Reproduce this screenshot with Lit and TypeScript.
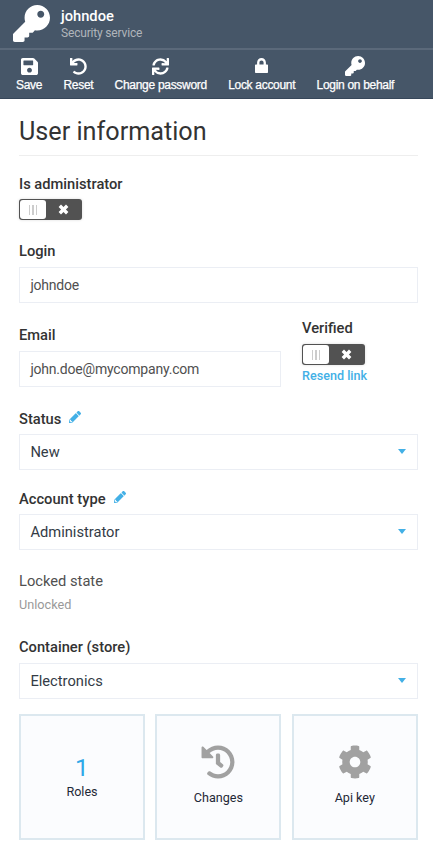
import { LitElement, html, css, svg } from "lit";
import { customElement } from "lit/decorators.js";

const PATHS: Record<string, [string, string]> = {
  key: ["0 0 512 512", "M512 176.001C512 273.203 433.202 352 336 352c-11.22 0-22.19-1.062-32.827-3.069l-24.012 27.014A23.999 23.999 0 0 1 261.223 384H224v40c0 13.255-10.745 24-24 24h-40v40c0 13.255-10.745 24-24 24H24c-13.255 0-24-10.745-24-24v-78.059c0-6.365 2.529-12.47 7.029-16.971l161.802-161.802C163.108 213.814 160 195.271 160 176 160 78.798 238.797.001 335.999 0 433.488-.001 512 78.511 512 176.001zM336 128c0 26.51 21.49 48 48 48s48-21.49 48-48-21.49-48-48-48-48 21.49-48 48z"],
  save: ["0 32 448 448", "M433.941 129.941l-83.882-83.882A48 48 0 0 0 316.118 32H48C21.49 32 0 53.49 0 80v352c0 26.51 21.49 48 48 48h352c26.51 0 48-21.49 48-48V163.882a48 48 0 0 0-14.059-33.941zM224 416c-35.346 0-64-28.654-64-64 0-35.346 28.654-64 64-64s64 28.654 64 64c0 35.346-28.654 64-64 64zm96-304.52V212c0 6.627-5.373 12-12 12H76c-6.627 0-12-5.373-12-12V108c0-6.627 5.373-12 12-12h228.52c3.183 0 6.235 1.264 8.485 3.515l3.48 3.48A11.996 11.996 0 0 1 320 111.48z"],
  undo: ["0 0 512 512", "M212.333 224.333H12c-6.627 0-12-5.373-12-12V12C0 5.373 5.373 0 12 0h48c6.627 0 12 5.373 12 12v78.112C117.773 39.279 184.26 7.47 258.175 8.007c136.906.994 246.448 111.623 246.157 248.532C504.041 393.258 393.12 504 256.333 504c-64.089 0-122.496-24.313-166.51-64.215-5.099-4.622-5.334-12.554-.467-17.42l33.967-33.967c4.474-4.474 11.662-4.717 16.401-.525C170.76 415.336 211.58 432 256.333 432c97.268 0 176-78.716 176-176 0-97.267-78.716-176-176-176-58.496 0-110.28 28.476-142.274 72.333h98.274c6.627 0 12 5.373 12 12v48c0 6.627-5.373 12-12 12z"],
  sync: ["0 0 512 512", "M440.65 12.57l4 82.77A247.16 247.16 0 0 0 255.83 8C134.73 8 33.91 94.92 12.29 209.82A12 12 0 0 0 24.09 224h49.05a12 12 0 0 0 11.67-9.26 175.91 175.91 0 0 1 317-56.94l-101.46-4.86a12 12 0 0 0-12.57 12v47.41a12 12 0 0 0 12 12H500a12 12 0 0 0 12-12V12a12 12 0 0 0-12-12h-47.37a12 12 0 0 0-11.98 12.57zM255.83 432a175.61 175.61 0 0 1-146-77.8l101.8 4.87a12 12 0 0 0 12.57-12v-47.4a12 12 0 0 0-12-12H12a12 12 0 0 0-12 12V500a12 12 0 0 0 12 12h47.35a12 12 0 0 0 12-12.6l-4.15-82.57A247.17 247.17 0 0 0 255.83 504c121.11 0 221.93-86.92 243.55-201.82a12 12 0 0 0-11.8-14.18h-49.05a12 12 0 0 0-11.67 9.26A175.86 175.86 0 0 1 255.83 432z"],
  lock: ["0 0 448 512", "M424 224h-48v-72C376 68.2 307.8 0 224 0S72 68.2 72 152v72H24c-13 0-24 11-24 24v240c0 13 11 24 24 24h400c13 0 24-11 24-24V248c0-13-11-24-24-24zm-128 0H152v-72c0-39.7 32.3-72 72-72s72 32.3 72 72v72z"],
  history: ["0 0 512 512", "M504 255.531c.253 136.64-111.18 248.372-247.82 248.468-59.015.042-113.223-20.53-155.822-54.911-11.077-8.94-11.905-25.541-1.839-35.607l11.267-11.267c8.609-8.609 22.353-9.551 31.891-1.984C173.062 425.135 212.781 440 256 440c101.705 0 184-82.311 184-184 0-101.705-82.311-184-184-184-48.814 0-93.149 18.969-126.068 49.932l50.754 50.754c10.08 10.08 2.941 27.314-11.313 27.314H24c-8.837 0-16-7.163-16-16V38.627c0-14.254 17.234-21.393 27.314-11.314l49.372 49.372C129.209 34.136 189.552 8 256 8c136.81 0 247.747 110.78 248 247.531zm-180.912 78.784l9.823-12.63c8.138-10.463 6.253-25.542-4.21-33.679L288 256.349V152c0-13.255-10.745-24-24-24h-16c-13.255 0-24 10.745-24 24v135.651l65.409 50.874c10.463 8.137 25.541 6.253 33.679-4.21z"],
  cog: ["0 0 512 512", "M487.4 315.7l-42.6-24.6c4.3-23.2 4.3-47 0-70.2l42.6-24.6c4.9-2.8 7.1-8.6 5.5-14-11.1-35.6-30-67.8-54.7-94.6-3.8-4.1-10-5.1-14.8-2.3L380.8 110c-17.9-15.4-38.5-27.3-60.8-35.1V25.8c0-5.6-3.9-10.5-9.4-11.7-36.7-8.2-74.3-7.8-109.2 0-5.5 1.2-9.4 6.1-9.4 11.7V75c-22.2 7.9-42.8 19.8-60.8 35.1L88.7 85.5c-4.9-2.8-11-1.9-14.8 2.3-24.7 26.7-43.6 58.9-54.7 94.6-1.7 5.4.6 11.2 5.5 14L67.3 221c-4.3 23.2-4.3 47 0 70.2l-42.6 24.6c-4.9 2.8-7.1 8.6-5.5 14 11.1 35.6 30 67.8 54.7 94.6 3.8 4.1 10 5.1 14.8 2.3l42.6-24.6c17.9 15.4 38.5 27.3 60.8 35.1v49.2c0 5.6 3.9 10.5 9.4 11.7 36.7 8.2 74.3 7.8 109.2 0 5.5-1.2 9.4-6.1 9.4-11.7v-49.2c22.2-7.9 42.8-19.8 60.8-35.1l42.6 24.6c4.9 2.8 11 1.9 14.8-2.3 24.7-26.7 43.6-58.9 54.7-94.6 1.5-5.5-.7-11.3-5.6-14.1zM256 336c-44.1 0-80-35.9-80-80s35.9-80 80-80 80 35.9 80 80-35.9 80-80 80z"],
  pencil: ["0 0 512 512", "M497.9 142.1l-46.1 46.1c-4.7 4.7-12.3 4.7-17 0l-111-111c-4.7-4.7-4.7-12.3 0-17l46.1-46.1c18.7-18.7 49.1-18.7 67.9 0l60.1 60.1c18.8 18.7 18.8 49.1 0 67.9zM284.2 99.8L21.6 362.4.4 483.9c-2.9 16.4 11.4 30.6 27.8 27.8l121.5-21.3 262.6-262.6c4.7-4.7 4.7-12.3 0-17l-111-111c-4.8-4.7-12.4-4.7-17.1 0zM88 424h48v36.3l-64.5 11.3-31.1-31.1L51.7 376H88v48z"],
  times: ["0 0 11 11", "M3 .6 5.5 3.1 8 .6 10.4 3 7.9 5.5 10.4 8 8 10.4 5.5 7.9 3 10.4.6 8 3.1 5.5.6 3z"],
};

const icon = (name: string, cls: string) => html`
  <svg class=${cls} viewBox=${PATHS[name][0]} fill="currentColor" aria-hidden="true">
    ${svg`<path d=${PATHS[name][1]}></path>`}
  </svg>`;

const ACTIONS = [
  ["save", "Save"],
  ["undo", "Reset"],
  ["sync", "Change password"],
  ["lock", "Lock account"],
  ["key", "Login on behalf"],
];

@customElement("toggle-switch")
export class ToggleSwitch extends LitElement {
  static styles = css`
    :host { display: block; }
    .track {
      box-sizing: border-box; width: 63px; height: 21px; display: flex; padding: 1px;
      border-radius: 3px; background: #525252; box-shadow: 0 0 3px rgba(0, 0, 0, 0.15);
    }
    .knob {
      width: 26px; height: 19px; border-radius: 3px; background: #fff;
      display: flex; align-items: center; justify-content: center; gap: 2px;
    }
    .grip { width: 1.5px; height: 10px; background: #ccc; }
    .off { flex: 1; display: flex; align-items: center; justify-content: center; color: #fff; }
    .times { width: 11px; height: 11px; }
  `;
  render() {
    return html`<div class="track" role="switch" aria-checked="false">
      <span class="knob"><i class="grip"></i><i class="grip"></i><i class="grip"></i></span>
      <span class="off">${icon("times", "times")}</span>
    </div>`;
  }
}

@customElement("app-root")
export class AppRoot extends LitElement {
  static styles = css`
    :host {
      display: block; width: 433px; height: 848px; overflow: hidden; background: #fff;
      font-family: Roboto, sans-serif; color: #333;
    }
    .head {
      box-sizing: border-box; height: 50px; display: flex; gap: 11px; padding: 5px 13px 0;
      background: #465668; border-bottom: 2px solid #5b697a;
    }
    .head-icon { width: 37px; height: 37px; color: #fff; }
    .name { font-size: 14.7px; line-height: 18px; padding-top: 2px; font-weight: 500; color: #fff; }
    .sub { font-size: 12px; line-height: 17px; letter-spacing: -0.18px; color: #b0b5bb; }
    .bar {
      box-sizing: border-box; height: 49px; display: flex; gap: 21.3px; padding: 6px 16px 0;
      background: #465668; border-bottom: 1px solid #37475a; color: #fff;
    }
    .action { display: flex; flex-direction: column; align-items: center; }
    .icon-box { height: 21px; display: flex; align-items: center; }
    .label {
      font: 12px/16px "Liberation Sans", sans-serif; white-space: nowrap;
      letter-spacing: -0.3px; -webkit-text-stroke: 0.25px #fff;
    }
    .ic-save, .ic-undo, .ic-sync { width: 17px; height: 17px; }
    .ic-lock { width: 13px; height: 15px; margin-top: -2px; }
    .ic-key { width: 20px; height: 20px; margin-top: -1px; }
    .body { padding: 0 15px 0 19px; width: 399px; }
    .title {
      margin: 0; height: 57px; box-sizing: border-box; padding-top: 18px;
      font-size: 25.2px; line-height: 30px; font-weight: 400; border-bottom: 1px solid #eee;
    }
    .field-label {
      font-size: 14.7px; line-height: 18px; font-weight: 500; display: flex; align-items: center;
    }
    .plain { font-weight: 400; color: #505050; }
    .value { font-size: 12.7px; line-height: 16px; color: #999; margin-top: 7px; }
    .box {
      box-sizing: border-box; height: 36px; border: 1px solid #ebeef4; margin-top: 6px;
      display: flex; align-items: center; justify-content: space-between; padding: 0 11px 0 10.4px;
      font-size: 14px; letter-spacing: -0.2px; color: #505050;
    }
    .select { font-size: 14.7px; letter-spacing: 0; color: #333b45; }
    .caret { border: 4.5px solid transparent; border-top: 5px solid #43b0e6; border-bottom: 0; margin-top: -2px; }
    .pencil { width: 12px; height: 12px; color: #43b0e6; margin: -4px 0 0 8px; }
    .admin { padding-top: 19px; }
    .admin toggle-switch { margin-top: 6px; }
    .login { padding-top: 22px; }
    .login .box, .email .box, .store .box { margin-top: 7px; }
    .row { display: flex; gap: 21px; padding-top: 16px; height: 68px; }
    .email { width: 262px; padding-top: 7px; }
    .verified toggle-switch { margin-top: 7px; }
    .link { font-size: 12.6px; line-height: 16px; font-weight: 500; color: #43b0e6; margin-top: 3px; }
    .status { padding-top: 23px; }
    .type { padding-top: 20px; }
    .locked { padding-top: 22px; }
    .store { padding-top: 25px; }
    .tiles { display: grid; grid-template-columns: repeat(3, 126px); column-gap: 10.4px; margin-top: 15px; }
    .tile {
      box-sizing: border-box; height: 126px; border: 2px solid #dce8ef; background: #fbfcfe;
      display: flex; flex-direction: column; align-items: center; justify-content: center;
      font-size: 12.6px; line-height: 16px; color: #1f2937; padding-bottom: 3px;
    }
    .tile.numeric { padding-bottom: 0; }
    .count { font-size: 24.5px; line-height: 30px; color: #2fa8e8; margin: -1px 0 1px; }
    .tile-icon { width: 34px; height: 34px; color: #a1a1a1; margin-bottom: 11px; }
  `;

  private select(value: string) {
    return html`<div class="box select"><span>${value}</span><i class="caret"></i></div>`;
  }

  render() {
    return html`
      <header class="head">
        ${icon("key", "head-icon")}
        <div><div class="name">johndoe</div><div class="sub">Security service</div></div>
      </header>
      <nav class="bar">
        ${ACTIONS.map(([name, label]) => html`
          <div class="action">
            <span class="icon-box">${icon(name, `ic-${name}`)}</span>
            <span class="label">${label}</span>
          </div>`)}
      </nav>
      <main class="body">
        <h1 class="title">User information</h1>
        <section class="admin">
          <div class="field-label">Is administrator</div>
          <toggle-switch></toggle-switch>
        </section>
        <section class="login">
          <div class="field-label">Login</div>
          <div class="box">johndoe</div>
        </section>
        <div class="row">
          <section class="email">
            <div class="field-label">Email</div>
            <div class="box">john.doe@mycompany.com</div>
          </section>
          <section class="verified">
            <div class="field-label">Verified</div>
            <toggle-switch></toggle-switch>
            <div class="link">Resend link</div>
          </section>
        </div>
        <section class="status">
          <div class="field-label">Status ${icon("pencil", "pencil")}</div>
          ${this.select("New")}
        </section>
        <section class="type">
          <div class="field-label">Account type ${icon("pencil", "pencil")}</div>
          ${this.select("Administrator")}
        </section>
        <section class="locked">
          <div class="field-label plain">Locked state</div>
          <div class="value">Unlocked</div>
        </section>
        <section class="store">
          <div class="field-label">Container (store)</div>
          ${this.select("Electronics")}
        </section>
        <div class="tiles">
          <div class="tile numeric"><span class="count">1</span><span>Roles</span></div>
          <div class="tile">${icon("history", "tile-icon")}<span>Changes</span></div>
          <div class="tile">${icon("cog", "tile-icon")}<span>Api key</span></div>
        </div>
      </main>`;
  }
}
